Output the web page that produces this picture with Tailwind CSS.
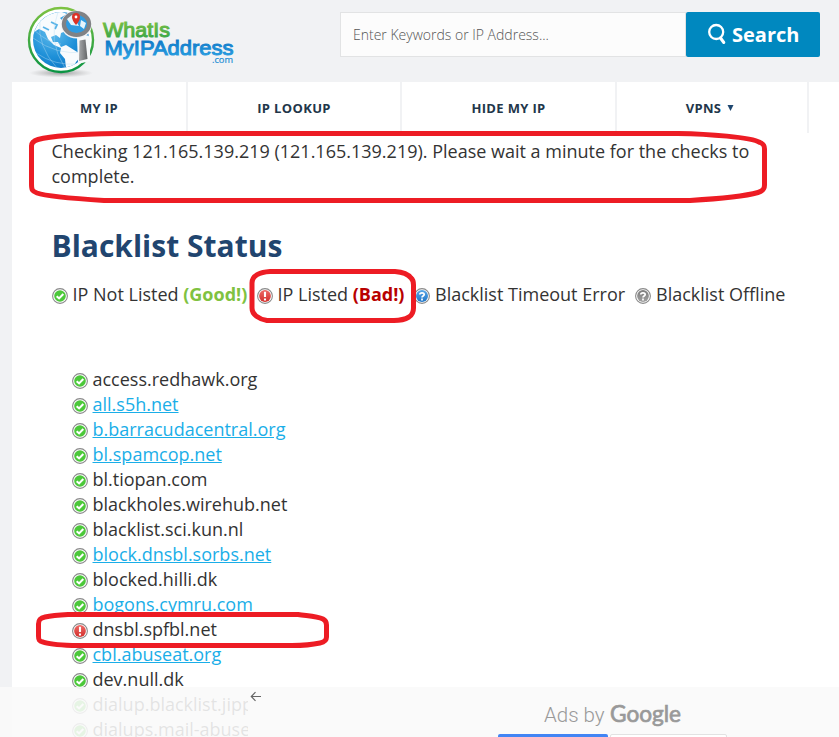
<!DOCTYPE html>
<html lang="en">
<head>
<meta charset="utf-8">
<title>Blacklist Check</title>
<script src="https://cdn.jsdelivr.net/npm/@tailwindcss/browser@4"></script>
</head>
<body class="bg-white">
<svg class="absolute h-0 w-0" xmlns="http://www.w3.org/2000/svg">
  <defs>
    <linearGradient id="gr" x1="0" y1="0" x2="0" y2="1"><stop offset="0" stop-color="#ee6a66"/><stop offset="1" stop-color="#d22f2c"/></linearGradient>
    <linearGradient id="gb" x1="0" y1="0" x2="0" y2="1"><stop offset="0" stop-color="#5aa7e6"/><stop offset="1" stop-color="#2277c8"/></linearGradient>
    <linearGradient id="gg" x1="0" y1="0" x2="0" y2="1"><stop offset="0" stop-color="#7d7d7d"/><stop offset="1" stop-color="#a0a0a0"/></linearGradient>
  </defs>
  <symbol id="ok" viewBox="0 0 16 16"><circle cx="8" cy="8" r="7.4" fill="#fff" stroke="#8a8a8a" stroke-width="1.1"/><circle cx="8" cy="8" r="5.8" fill="#4cc83a"/><path d="M4.7 8.2 7.1 10.4 11.3 6.1" fill="none" stroke="#fff" stroke-width="2.1"/></symbol>
  <symbol id="bad" viewBox="0 0 16 16"><circle cx="8" cy="8" r="7.4" fill="#fff" stroke="#8a8a8a" stroke-width="1.1"/><circle cx="8" cy="8" r="5.9" fill="url(#gr)"/><path d="M8 3.8V9M8 10.4v2" fill="none" stroke="#fff" stroke-width="2.1"/></symbol>
  <symbol id="q" viewBox="0 0 16 16"><path d="M5.8 6.5C5.8 4.3 10.2 4.3 10.2 6.5 10.2 8 8 7.9 8 9.4M8 10.6v1.8" fill="none" stroke="#fff" stroke-width="1.7"/></symbol>
  <symbol id="timeout" viewBox="0 0 16 16"><circle cx="8" cy="8" r="7.4" fill="#fff" stroke="#8a8a8a" stroke-width="1.1"/><circle cx="8" cy="8" r="6" fill="url(#gb)"/><use href="#q" width="16" height="16"/></symbol>
  <symbol id="off" viewBox="0 0 16 16"><circle cx="8" cy="8" r="7.4" fill="#fff" stroke="#8a8a8a" stroke-width="1.1"/><circle cx="8" cy="8" r="5.9" fill="url(#gg)"/><use href="#q" width="16" height="16"/></symbol>
</svg>
<div class="relative w-[839px] h-[737px] overflow-hidden bg-[#f1f2f4] font-['Open_Sans',sans-serif] text-[#333]">
  <header class="flex h-[82px]">
    <div class="w-[340px] shrink-0">
      <svg width="340" height="82" viewBox="0 0 340 82">
        <defs>
          <linearGradient id="ring" x1="0" y1="0" x2="0" y2="1"><stop offset="0" stop-color="#7cc242"/><stop offset="1" stop-color="#0b9444"/></linearGradient>
          <radialGradient id="sea" cx=".35" cy=".35" r=".75"><stop offset="0" stop-color="#63bdec"/><stop offset=".6" stop-color="#1e90d8"/><stop offset="1" stop-color="#0d76c4"/></radialGradient>
          <radialGradient id="shade"><stop offset="0" stop-color="#777" stop-opacity=".7"/><stop offset="1" stop-color="#999" stop-opacity="0"/></radialGradient>
          <linearGradient id="metal"><stop offset="0" stop-color="#a5a7a9"/><stop offset="1" stop-color="#636567"/></linearGradient>
          <linearGradient id="tg" x1="0" y1="0" x2="0" y2="1"><stop offset="0" stop-color="#85c441"/><stop offset="1" stop-color="#2fa24a"/></linearGradient>
          <linearGradient id="tb" x1="0" y1="0" x2="0" y2="1"><stop offset="0" stop-color="#0a6fc0"/><stop offset="1" stop-color="#2aa3e4"/></linearGradient>
          <clipPath id="globe"><circle cx="61" cy="40" r="28"/></clipPath>
        </defs>
        <ellipse cx="61" cy="73" rx="32" ry="4.500" fill="url(#shade)"/>
        <circle cx="61" cy="40" r="32" fill="#fff" stroke="url(#ring)" stroke-width="2.400"/>
        <circle cx="61" cy="40" r="28" fill="url(#sea)"/>
        <g clip-path="url(#globe)">
          <path d="M39 22 48 15 60 11 67 14 60 18 65 23 71 27 66 31 61 33 60 38 56 35 51 37 53 42 58 42 61 47 66 45 74 50 82 55 76 62 72 70 66 68 65 59 60 53 61 48 54 45 48 39 45 32 39 29 34 32Z" fill="#f8fbfd"/>
          <path d="M80 34 90 36V62L78 64Z" fill="#f8fbfd"/>
          <path d="M51 22 57 25 55 29M43 27l6 3" fill="none" stroke="#58b3e7" stroke-width="1.800"/>
          <path d="M33 38Q57 56 84 52M36 53Q55 66 78 64M40 21Q37 46 57 68M58 12Q47 40 65 68M34 30Q48 43 61 44" fill="none" stroke="#b8def4" stroke-opacity=".6" stroke-width=".7"/>
        </g>
        <path d="M77 38 90 36 90 61 78 64Z" fill="#f6f8f9"/>
        <path d="M79.500 40.500 85.500 39.500 87.500 59 79 61Z" fill="url(#metal)"/>
        <ellipse cx="76.500" cy="24.500" rx="15.500" ry="14" fill="#f1f2f4"/>
        <ellipse cx="76.500" cy="24" rx="12.600" ry="11" fill="#2f9be0" stroke="#808285" stroke-width="4.200"/>
        <path d="M67 19 72 15 80 16 76 21 79 26 71 25ZM81 20l5 3-2 6-4-3Z" fill="#e6f4fb"/>
        <path d="M76 25Q72 20.500 72 17a4 4 0 0 1 8 0Q80 20.500 76 25Z" fill="#dc3327"/><circle cx="76" cy="17" r="1.400" fill="#fff"/>
        <text x="103" y="37" font-family="Liberation Sans" font-size="20.500" textLength="67" lengthAdjust="spacingAndGlyphs" fill="url(#tg)" stroke="url(#tg)" stroke-width="1">WhatIs</text>
        <text x="104.500" y="55" font-family="Liberation Sans" font-size="20.500" textLength="129" lengthAdjust="spacingAndGlyphs" fill="url(#tb)" stroke="url(#tb)" stroke-width="1">MyIPAddress</text>
        <text x="212" y="63" font-family="Open Sans" font-size="9" textLength="21" lengthAdjust="spacingAndGlyphs" fill="#258fd4" stroke="#258fd4" stroke-width=".2">.com</text>
      </svg>
    </div>
    <div class="mt-3 flex h-[45px] w-[346px] shrink-0 items-center border border-[#e2e3e4] bg-[#fcfcfc] pl-3 text-[14px] font-light text-[#555] whitespace-nowrap"><span>Enter Keywords or IP Address...</span></div>
    <div class="mt-3 flex h-[45px] w-[134px] shrink-0 items-center rounded-[2px] bg-[#0088bf] pl-[22px] text-[20px] font-bold text-white">
      <svg class="-mt-[2px] mr-[6px]" width="18" height="22" viewBox="0 0 18 22"><circle cx="8.200" cy="9" r="7" fill="none" stroke="#fff" stroke-width="2.300"/><path d="m12.500 15 3.300 4.500" stroke="#fff" stroke-width="3" stroke-linecap="round"/></svg>
      <span>Search</span>
    </div>
  </header>
  <div class="ml-3 h-[655px] bg-white">
    <nav class="flex h-[51px] text-[13px] font-bold text-[#22364a] leading-[52px] tracking-[0.35px] whitespace-nowrap text-center">
      <div class="w-[176px] border-r-2 border-[#f1f2f4]"><span>MY IP</span></div>
      <div class="w-[214px] border-r-2 border-[#f1f2f4]"><span>IP LOOKUP</span></div>
      <div class="w-[215px] border-r-2 border-[#f1f2f4]"><span>HIDE MY IP</span></div>
      <div class="flex w-[192px] items-center justify-center border-r-2 border-[#f1f2f4] pr-1"><span>VPNS</span><svg class="ml-[6px]" width="7" height="6" viewBox="0 0 7 6"><path d="M.5 0h6L3.500 6Z" fill="#1f4770"/></svg></div>
    </nav>
    <main class="pl-[39.5px] pt-[6px] text-[18px] leading-[25px] whitespace-nowrap">
      <p>Checking 121.165.139.219 (121.165.139.219). Please wait a minute for the checks to<br>complete.</p>
      <h1 class="mt-[37px] text-[30px] font-bold leading-[40px] text-[#21456f]"><span>Blacklist Status</span></h1>
      <div class="mt-4 flex h-[25px]">
        <div class="flex w-[205px]"><svg class="mr-[5px] mt-[6px]" width="16" height="16"><use href="#ok"/></svg><span>IP Not Listed <b class="text-[#7fc241]">(Good!)</b></span></div>
        <div class="flex w-[157.5px]"><svg class="mr-[5px] mt-[6px]" width="16" height="16"><use href="#bad"/></svg><span>IP Listed <b class="text-[#b80000]">(Bad!)</b></span></div>
        <div class="flex w-[221px]"><svg class="mr-[5px] mt-[6px]" width="16" height="16"><use href="#timeout"/></svg><span>Blacklist Timeout Error</span></div>
        <div class="flex"><svg class="mr-[5px] mt-[6px]" width="16" height="16"><use href="#off"/></svg><span>Blacklist Offline</span></div>
      </div>
      <ul class="mt-[60px] ml-5">
        <li class="flex"><svg class="mr-[5px] mt-[6px]" width="16" height="16"><use href="#ok"/></svg><span>access.redhawk.org</span></li>
        <li class="flex"><svg class="mr-[5px] mt-[6px]" width="16" height="16"><use href="#ok"/></svg><a class="text-[#1aaee8] underline">all.s5h.net</a></li>
        <li class="flex"><svg class="mr-[5px] mt-[6px]" width="16" height="16"><use href="#ok"/></svg><a class="text-[#1aaee8] underline">b.barracudacentral.org</a></li>
        <li class="flex"><svg class="mr-[5px] mt-[6px]" width="16" height="16"><use href="#ok"/></svg><a class="text-[#1aaee8] underline">bl.spamcop.net</a></li>
        <li class="flex"><svg class="mr-[5px] mt-[6px]" width="16" height="16"><use href="#ok"/></svg><span>bl.tiopan.com</span></li>
        <li class="flex"><svg class="mr-[5px] mt-[6px]" width="16" height="16"><use href="#ok"/></svg><span>blackholes.wirehub.net</span></li>
        <li class="flex"><svg class="mr-[5px] mt-[6px]" width="16" height="16"><use href="#ok"/></svg><span>blacklist.sci.kun.nl</span></li>
        <li class="flex"><svg class="mr-[5px] mt-[6px]" width="16" height="16"><use href="#ok"/></svg><a class="text-[#1aaee8] underline">block.dnsbl.sorbs.net</a></li>
        <li class="flex"><svg class="mr-[5px] mt-[6px]" width="16" height="16"><use href="#ok"/></svg><span>blocked.hilli.dk</span></li>
        <li class="flex"><svg class="mr-[5px] mt-[6px]" width="16" height="16"><use href="#ok"/></svg><a class="text-[#1aaee8] underline">bogons.cymru.com</a></li>
        <li class="flex"><svg class="mr-[5px] mt-[6px]" width="16" height="16"><use href="#bad"/></svg><span>dnsbl.spfbl.net</span></li>
        <li class="flex"><svg class="mr-[5px] mt-[6px]" width="16" height="16"><use href="#ok"/></svg><a class="text-[#1aaee8] underline">cbl.abuseat.org</a></li>
        <li class="flex"><svg class="mr-[5px] mt-[6px]" width="16" height="16"><use href="#ok"/></svg><span>dev.null.dk</span></li>
        <li class="flex"><svg class="mr-[5px] mt-[6px]" width="16" height="16"><use href="#ok"/></svg><span>dialup.blacklist.jippg.org</span></li>
        <li class="flex"><svg class="mr-[5px] mt-[6px]" width="16" height="16"><use href="#ok"/></svg><span>dialups.mail-abuse.org</span></li>
      </ul>
    </main>
  </div>

  <div class="absolute left-0 top-[687px] flex h-[50px] w-[839px]">
    <div class="w-[248px] bg-[#f9f9f9]/89"></div>
    <div class="relative grow bg-[#fafafa]">
      <svg class="absolute left-[2px] top-1" width="12" height="11" viewBox="0 0 12 11"><path d="M11 5.500H1.500M5.500 1.200 1.300 5.500l4.200 4.300" fill="none" stroke="#666" stroke-width="1.200"/></svg>
      <div class="flex pl-[296px] pt-4 leading-6 text-[#999] whitespace-nowrap"><span class="w-[66px] font-['Roboto'] font-light text-[20.5px]">Ads by</span>
        <svg width="74" height="26" viewBox="0 0 74 26"><text x="0" y="19" font-family="Lato" font-weight="400" font-size="22.500" textLength="71" lengthAdjust="spacingAndGlyphs" fill="#999" stroke="#999" stroke-width=".7">Google</text></svg>
      </div>
      <div class="absolute left-[250px] top-[47px] flex h-3 gap-[2px]"><div class="w-[110px] rounded-t-[2px] bg-[#4285f4]"></div><div class="w-[117px] rounded-t-[2px] border border-[#e2e2e2] bg-white"></div></div>
    </div>
  </div>

  <svg class="pointer-events-none absolute left-0 top-0" width="839" height="737" fill="none" stroke="#ed1c24" stroke-width="5" stroke-linejoin="round">
    <path d="M115 133.500H678C708 134 751 137 760 142.500 764 144 764.500 146 764.500 149V185C764.500 189 763 191 758 192.500 742 197 715 199 690 200.500H104C80 199 48 197 37 193 32 191 31.500 190 31.500 184V146C31.500 143 33 141 38 139.500 55 135 85 134 115 133.500Z"/>
    <path d="M270 271.500H395C402 272 408 274 411 278 413.500 280 413.500 282 413.500 285V308C413.500 312 412 315 409 317 404 320 400 320.500 394 320.500H267C259 319 252 315 252 308V283C252 275 261 272 270 271.500Z"/>
    <path d="M68 614.500H298C309 616 317 616 323 619 326 620.500 326.500 622 326.500 625V637C326.500 640 325 642 320 643 311 645 303 645.500 292 645.500H72C60 645 48 644 43 642 39 641 38.500 640 38.500 636V624C38.500 620 40 618 45 617 52 615.500 59 615 68 614.500Z"/>
  </svg>
</div>
</body>
</html>
